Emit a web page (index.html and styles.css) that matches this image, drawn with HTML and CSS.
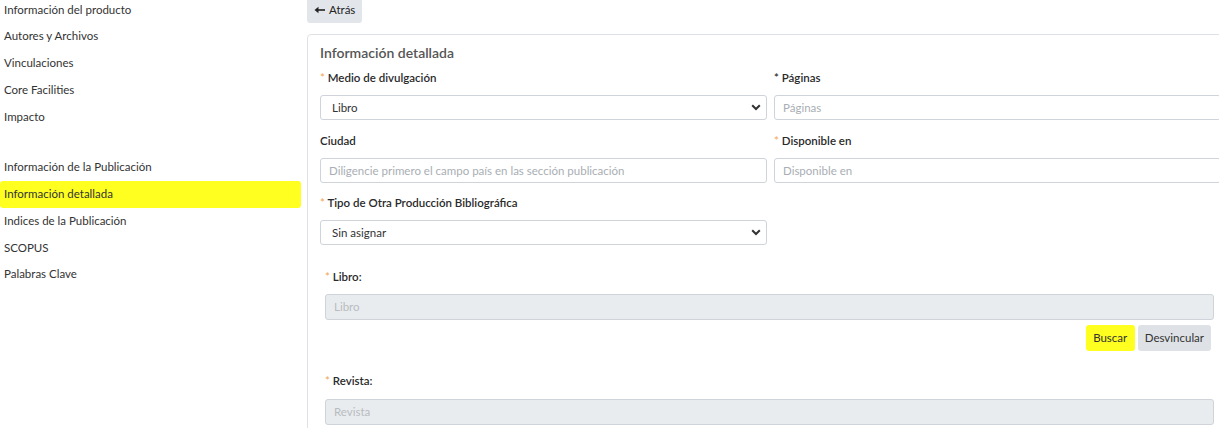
FILE: index.html
```html
<!DOCTYPE html>
<html lang="es">
<head>
    <meta charset="UTF-8">
    <meta name="viewport" content="width=device-width, initial-scale=1.0">
    <title>Información detallada</title>
    <link rel="stylesheet" href="styles.css">
</head>
<body>

<div class="page">
    <aside class="sidebar">
        <ul class="menu">
            <li><a href="#">Información del producto</a></li>
            <li><a href="#">Autores y Archivos</a></li>
            <li><a href="#">Vinculaciones</a></li>
            <li><a href="#">Core Facilities</a></li>
            <li><a href="#">Impacto</a></li>
        </ul>
        <ul class="menu">
            <li><a href="#">Información de la Publicación</a></li>
            <li><a href="#" class="active">Información detallada</a></li>
            <li><a href="#">Indices de la Publicación</a></li>
            <li><a href="#">SCOPUS</a></li>
            <li><a href="#">Palabras Clave</a></li>
        </ul>
    </aside>

    <main class="main">
        <button type="button" class="btn btn-back">
            <svg class="back-icon" width="12" height="8" viewBox="0 0 12 8">
                <path d="M11 4H3" stroke="#222" stroke-width="1.6"/>
                <path d="M0.5 4L4.5 0.8V7.2Z" fill="#222"/>
            </svg>
            Atrás
        </button>

        <section class="card">
            <h3 class="card-title">Información detallada</h3>

            <div class="form-grid">
                <div class="form-group">
                    <label><span class="req">*</span> Medio de divulgación</label>
                    <div class="select-wrap">
                        <select class="control">
                            <option>Libro</option>
                        </select>
                        <svg class="chevron" width="10" height="7" viewBox="0 0 10 7">
                            <path d="M1.2 1.2L5 5L8.8 1.2" fill="none" stroke="#333" stroke-width="2"/>
                        </svg>
                    </div>
                </div>
                <div class="form-group">
                    <label>* Páginas</label>
                    <input type="text" class="control" placeholder="Páginas">
                </div>
                <div class="form-group">
                    <label>Ciudad</label>
                    <input type="text" class="control" placeholder="Diligencie primero el campo país en las sección publicación">
                </div>
                <div class="form-group">
                    <label><span class="req">*</span> Disponible en</label>
                    <input type="text" class="control" placeholder="Disponible en">
                </div>
                <div class="form-group">
                    <label><span class="req">*</span> Tipo de Otra Producción Bibliográfica</label>
                    <div class="select-wrap">
                        <select class="control">
                            <option>Sin asignar</option>
                        </select>
                        <svg class="chevron" width="10" height="7" viewBox="0 0 10 7">
                            <path d="M1.2 1.2L5 5L8.8 1.2" fill="none" stroke="#333" stroke-width="2"/>
                        </svg>
                    </div>
                </div>
            </div>

            <div class="link-block">
                <label><span class="req">*</span> Libro:</label>
                <input type="text" class="control" placeholder="Libro" disabled>
                <div class="actions">
                    <button type="button" class="btn btn-yellow">Buscar</button>
                    <button type="button" class="btn btn-gray">Desvincular</button>
                </div>

                <label class="second"><span class="req">*</span> Revista:</label>
                <input type="text" class="control" placeholder="Revista" disabled>
            </div>
        </section>
    </main>
</div>

</body>
</html>
```

FILE: styles.css
```css
html, body {
    margin: 0;
    padding: 0;
    background: #fff;
    overflow: hidden;
    font-family: "Lato", "Liberation Sans", sans-serif;
    font-size: 11.5px;
    color: #333;
}

/* la página está un poco desplazada hacia arriba */
.page {
    display: flex;
    gap: 6px;
    margin-top: -3.5px;
    width: 1240px;
}

/* Menú lateral */
.sidebar {
    width: 301px;
    flex-shrink: 0;
}

.menu {
    list-style: none;
    margin: 0 0 24px 0;
    padding: 0;
}

.menu a {
    display: block;
    padding: 4px 4px;
    line-height: 18.75px;
    color: #333;
    text-decoration: none;
    border-radius: 3px;
}

.menu a.active {
    background-color: #ffff20;
}

/* Contenido */
.main {
    width: 927px;
    flex-shrink: 0;
}

.btn {
    font-family: inherit;
    font-size: 11.5px;
    border: none;
    border-radius: 3px;
    padding: 0 8px;
    height: 26px;
    color: #333;
    cursor: pointer;
}

.btn-back {
    display: flex;
    align-items: center;
    gap: 3px;
    height: 26.5px;
    padding: 0 7px;
    background-color: #e2e6ea;
    color: #222;
}

.card {
    margin-top: 11px;
    border: 1px solid #dee2e6;
    border-radius: 4px;
    padding: 8px 12px 20px 12px;
}

.card-title {
    margin: 0 0 6px 0;
    font-size: 14px;
    line-height: 20px;
    font-weight: 600;
    color: #555;
}

.form-grid {
    display: grid;
    grid-template-columns: 447px 447px;
    column-gap: 7px;
}

.form-group {
    margin-bottom: 11.5px;
}

label {
    display: block;
    margin-bottom: 9px;
    line-height: 17px;
    font-weight: 600;
    color: #2a2a2a;
}

.req {
    color: #f2a654;
    font-weight: 400;
}

.control {
    display: block;
    box-sizing: border-box;
    width: 100%;
    height: 25px;
    padding: 0 8px;
    border: 1px solid #ced4da;
    border-radius: 3px;
    background: #fff;
    font-family: inherit;
    font-size: 11.5px;
    color: #333;
}

.control::placeholder {
    color: #a9aeb4;
}

.select-wrap {
    position: relative;
}

select.control {
    appearance: none;
    -webkit-appearance: none;
    padding-left: 11px;
}

.chevron {
    position: absolute;
    right: 6px;
    top: 9px;
}

/* Libro / Revista */
.link-block {
    padding: 11px 7px 0 5px;
}

.link-block .control {
    height: 26px;
}

.link-block .control:disabled {
    background-color: #e9ecef;
}

.link-block .control:disabled::placeholder {
    color: #b8bcc0;
}

.actions {
    display: flex;
    justify-content: flex-end;
    gap: 3px;
    margin: 5px 3px 21px 0;
}

.btn-yellow {
    background-color: #ffff20;
    padding: 0 7.5px;
}

.btn-gray {
    background-color: #dee2e6;
    padding: 0 7px;
}

.link-block label.second {
    margin-bottom: 10px;
}
```
